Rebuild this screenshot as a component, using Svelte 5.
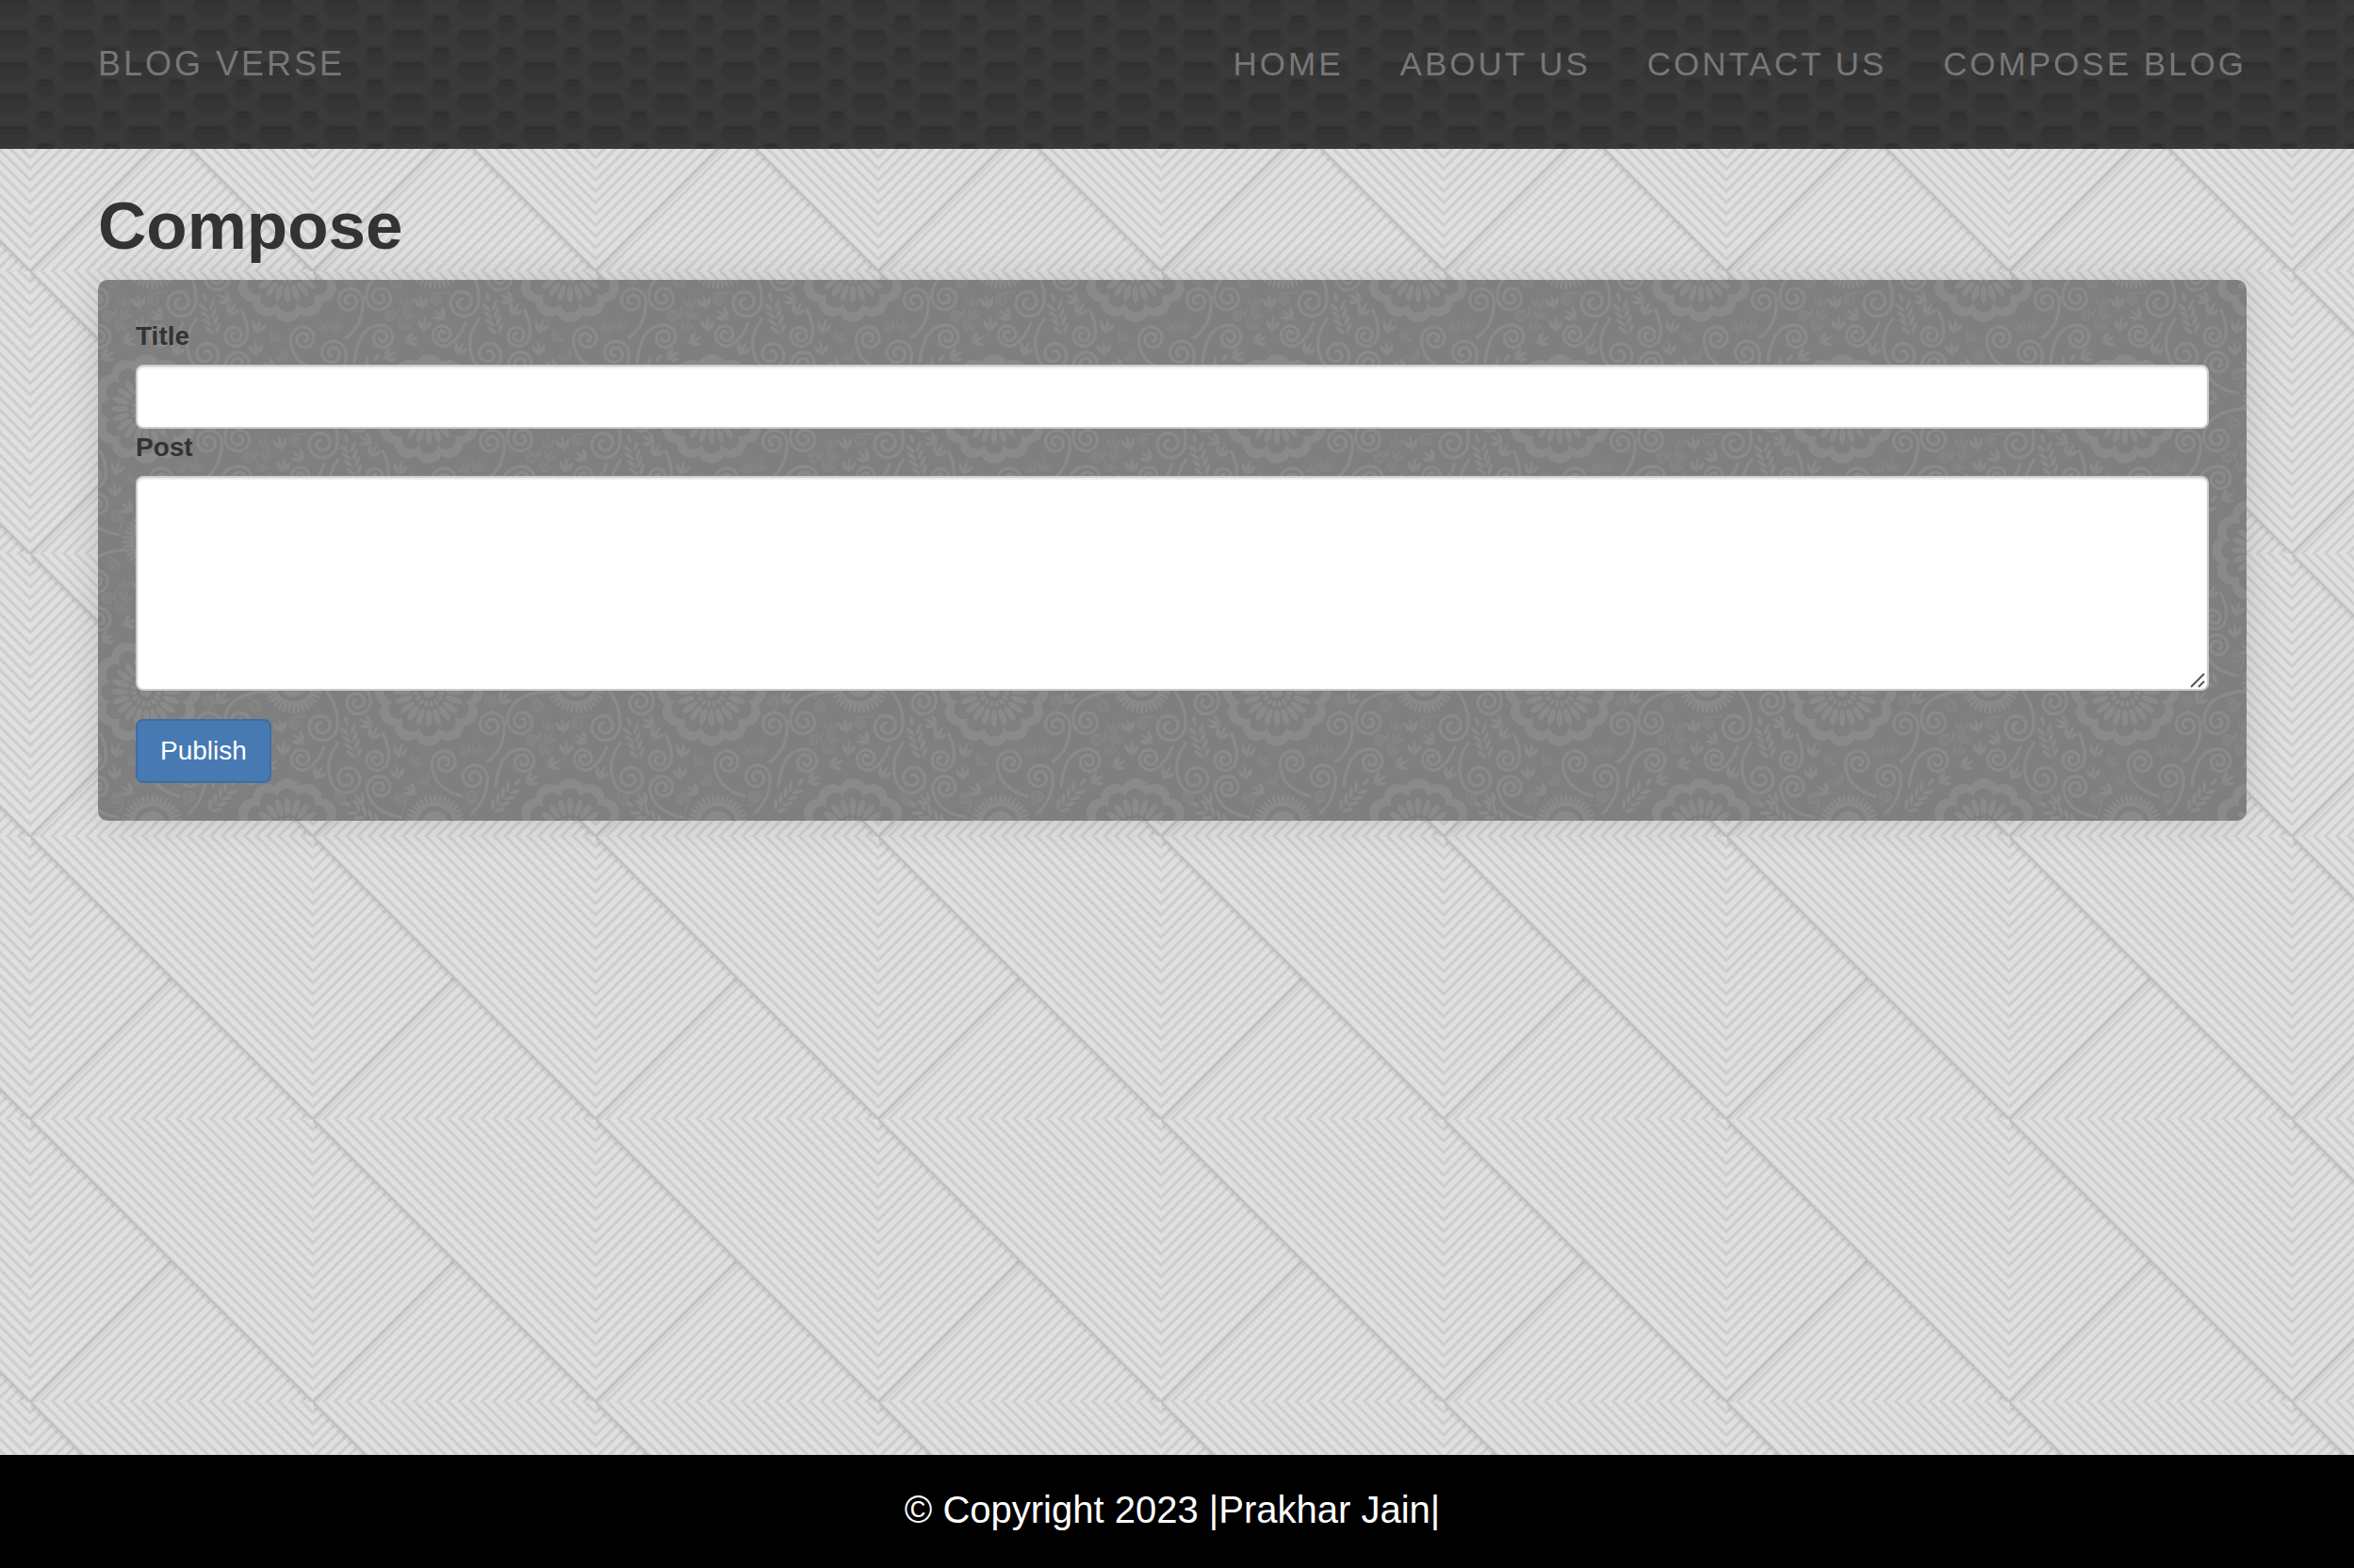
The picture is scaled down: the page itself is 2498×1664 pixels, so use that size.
<script lang="ts">
  type Point = [number, number];

  const links = ['Home', 'About Us', 'Contact Us', 'Compose Blog'];

  let title = $state('');
  let post = $state('');

  const steps = (count: number) => Array.from({ length: count }, (_, i) => i);

  // A scroll: a tail that flows into an inward spiral.
  function scroll(cx: number, cy: number, r: number, start: number, dir: number, reach: number, ex: number, ey: number) {
    const a0 = (start * Math.PI) / 180;
    const at = (a: number, rad: number): Point => [cx + rad * Math.cos(a), cy + rad * Math.sin(a)];
    const [px, py] = at(a0, r);
    const qx = px + dir * Math.sin(a0) * reach;
    const qy = py - dir * Math.cos(a0) * reach;
    let d = `M${ex} ${ey}Q${qx.toFixed(1)} ${qy.toFixed(1)} ${px.toFixed(1)} ${py.toFixed(1)}`;
    const count = 44;
    for (let i = 1; i <= count; i++) {
      const t = i / count;
      const [x, y] = at(a0 + dir * t * Math.PI * 3.4, r * (1 - t * 0.8));
      d += `L${x.toFixed(1)} ${y.toFixed(1)}`;
    }
    return d;
  }

  const scrolls = [
    scroll(183, 152, 50, 10, 1, 60, 200, 40),
    scroll(297, 75, 44, -20, 1, 30, 310, 10),
    scroll(120, 255, 38, 60, 1, 40, 192, 218),
    scroll(265, 318, 50, 150, -1, 75, 235, 205),
    scroll(357, 258, 38, 20, 1, 40, 380, 178),
    scroll(370, 348, 42, 170, 1, 70, 435, 442),
    scroll(577, 268, 42, 180, 1, 80, 630, 375),
    scroll(668, 315, 44, 0, -1, 70, 662, 430),
    scroll(722, 148, 44, 0, -1, 80, 712, 265),
    scroll(820, 137, 44, 180, -1, 85, 905, 40),
    scroll(825, 265, 40, -90, 1, 75, 738, 342),
  ];

  const curls = [
    scroll(100, 143, 20, -90, -1, 14, 140, 120),
    scroll(240, 378, 20, 90, -1, 12, 275, 408),
    scroll(432, 385, 20, 0, -1, 14, 440, 430),
    scroll(660, 378, 20, 0, -1, 12, 640, 405),
    scroll(722, 75, 20, 0, -1, 12, 715, 110),
    scroll(870, 88, 20, 0, 1, 12, 850, 60),
    scroll(852, 197, 20, 0, -1, 12, 880, 170),
  ];

  const sprigs = [
    [52, 150, -10], [110, 192, -50], [62, 222, 5], [22, 272, 65], [175, 300, 30],
    [325, 140, -60], [350, 175, 30], [433, 230, 15], [425, 300, -5], [465, 355, -55],
    [303, 385, -40], [765, 62, 40], [852, 322, 60],
  ];
  const paleSprigs = [[640, 230, -30], [683, 225, 10], [485, 262, 40], [512, 322, -40], [905, 150, 0], [895, 225, 30], [10, 190, 20]];
  const ferns = [[280, 200, -15], [765, 380, 40], [320, 438, -55]];

  // Copies that fill a 900-unit tile with a half-drop repeat.
  const copies: Point[] = [
    [0, 0], [900, 0], [-900, 0], [0, 900], [900, 900], [-900, 900],
    [450, 450], [-450, 450], [450, -450], [-450, -450],
  ];
</script>

{#snippet sprig(x: number, y: number, turn: number)}
  <g transform="translate({x} {y}) rotate({turn})">
    <path d="M0 28Q-11 4 0-27Q11 4 0 28M-3 18Q-24 13-22-13Q-4-5-3 18M3 18Q24 13 22-13Q4-5 3 18" />
  </g>
{/snippet}

<div class="page">
  <svg class="texture" aria-hidden="true">
    <defs>
      <pattern id="weave" x="32" y="288" width="300" height="300" patternUnits="userSpaceOnUse">
        <rect class="weave-base" width="300" height="300" />
        <clipPath id="upper"><path d="M0 0H300V300Z" /></clipPath>
        <clipPath id="lower"><path d="M0 0V300H300Z" /></clipPath>
        <g clip-path="url(#upper)">
          {#each steps(25) as k}
            <path class="halo" d="M{k * 12} -1L{k * 12 + 302} 301" />
            <path class="thread" d="M{k * 12} -1L{k * 12 + 302} 301" />
          {/each}
        </g>
        <g clip-path="url(#lower)">
          {#each steps(51) as k}
            <path class="halo" d="M-1 {k * 12}L{k * 12} -1" />
            <path class="thread" d="M-1 {k * 12}L{k * 12} -1" />
          {/each}
          <path class="seam-shade" d="M0 303L151 152" />
          <path class="seam" d="M0 300L150 150" />
          <path class="seam-shade" d="M-1 1L299 301" />
        </g>
        <path class="seam" d="M-2 -2L302 302" />
      </pattern>
    </defs>
    <rect width="100%" height="100%" fill="url(#weave)" />
  </svg>

  <header>
    <svg class="texture" aria-hidden="true">
      <defs>
        <linearGradient id="hollow" x1="0" y1="0" x2="0" y2="1">
          <stop offset="0" stop-color="#2d2d2d" />
          <stop offset="0.35" stop-color="#343434" />
          <stop offset="1" stop-color="#383838" />
        </linearGradient>
        <filter id="soften" x="-10%" y="-10%" width="120%" height="120%"><feGaussianBlur stdDeviation="0.9" /></filter>
        <pattern id="comb" x="13" y="14" width="70" height="34" patternUnits="userSpaceOnUse">
          <rect class="comb-base" width="70" height="34" />
          <g filter="url(#soften)">
            <path fill="url(#hollow)" d="M29 2H41L47 13L41 25H29L23 13Z" />
            {#each [[0, 18], [70, 18], [0, -16], [70, -16]] as [x, y]}
              <path fill="url(#hollow)" d="M{x - 14} {y}H{x + 14}L{x + 20} {y + 11}L{x + 14} {y + 23}H{x - 14}L{x - 20} {y + 11}Z" />
            {/each}
          </g>
          <path class="comb-seam" d="M0 20V32M70 20V32" />
        </pattern>
      </defs>
      <rect width="100%" height="100%" fill="url(#comb)" />
    </svg>
    <div class="container bar">
      <a class="brand" href="#home">Blog Verse</a>
      <nav>
        {#each links as link}
          <a href="#{link.toLowerCase().replace(' ', '-')}">{link}</a>
        {/each}
      </nav>
    </div>
  </header>

  <main class="container">
    <h1>Compose</h1>
    <form class="panel" onsubmit={(e) => e.preventDefault()}>
      <svg class="texture" aria-hidden="true">
        <defs>
          <g id="motif">
            <g class="scrolls">
              {#each scrolls as d}<path {d} />{/each}
            </g>
            <g class="curls">
              {#each curls as d}<path {d} />{/each}
            </g>
            <g class="leaf">
              {#each sprigs as [x, y, turn]}{@render sprig(x, y, turn)}{/each}
              {#each ferns as [x, y, turn]}
                <g transform="translate({x} {y}) rotate({turn})">
                  {#each steps(4) as k}
                    <ellipse cx="-14" cy={k * 25 - 36} rx="6" ry="18" transform="rotate(-35 -14 {k * 25 - 36})" />
                    <ellipse cx="14" cy={k * 25 - 36} rx="6" ry="18" transform="rotate(35 14 {k * 25 - 36})" />
                  {/each}
                  <ellipse cy="-66" rx="6" ry="14" />
                </g>
              {/each}
            </g>
            <g class="leaf pale">
              {#each paleSprigs as [x, y, turn]}{@render sprig(x, y, turn)}{/each}
            </g>
            <g transform="translate(95 15)">
              {#each steps(36) as k}
                <ellipse class="leaf" cy="-80" rx="5" ry="16" transform="rotate({k * 10})" />
              {/each}
              <circle class="ring" r="65" />
              <circle class="leaf" r="43" />
              <circle class="ground" r="12" />
            </g>
            <g transform="translate(525 42)">
              <circle class="leaf" r="150" />
              {#each steps(12) as k}
                <circle class="leaf" cy="-127" r="46" transform="rotate({k * 30})" />
              {/each}
              <circle class="ground" r="112" />
              {#each steps(12) as k}
                <circle class="ground" cy="-112" r="31" transform="rotate({k * 30})" />
              {/each}
              {#each steps(20) as k}
                <ellipse class="leaf" cy="-84" rx="10" ry="28" transform="rotate({k * 18})" />
              {/each}
              {#each steps(15) as k}
                <ellipse class="leaf" cy="-40" rx="6" ry="10" transform="rotate({k * 24})" />
              {/each}
              <circle class="leaf" r="18" />
            </g>
          </g>
          <pattern id="paisley" width="900" height="900" patternUnits="userSpaceOnUse" patternTransform="translate(476 423) scale(0.33333)">
            <rect class="ground" width="900" height="900" />
            {#each copies as [x, y]}<use href="#motif" {x} {y} />{/each}
          </pattern>
        </defs>
        <rect class="fabric" width="100%" height="100%" fill="url(#paisley)" />
      </svg>

      <label for="title">Title</label>
      <input id="title" type="text" bind:value={title} />
      <label for="post">Post</label>
      <div class="area">
        <textarea id="post" bind:value={post}></textarea>
        <svg class="grip" viewBox="0 0 16 16" aria-hidden="true"><path d="M1 15L15 1M9 15L15 9" /></svg>
      </div>
      <button type="submit">Publish</button>
    </form>
  </main>

  <footer>© Copyright 2023 |Prakhar Jain|</footer>
</div>

<style>
  :global(body) {
    margin: 0;
  }
  .page {
    position: relative;
    isolation: isolate;
    display: flex;
    flex-direction: column;
    min-height: 100vh;
    font-family: 'Liberation Sans', Arial, sans-serif;
    font-size: 28px;
    line-height: 40px;
    color: #333;
  }
  .texture {
    position: absolute;
    inset: 0;
    z-index: -1;
    width: 100%;
    height: 100%;
  }
  .weave-base { fill: #e0e0e0; }
  .halo { stroke: #d7d7d7; stroke-width: 4; }
  .thread { stroke: #cccccc; stroke-width: 2; }
  .seam { stroke: #bfbfbf; stroke-width: 2; }
  .seam-shade { stroke: #000; stroke-opacity: 0.05; stroke-width: 5; }
  .comb-base { fill: #3a3a3a; }
  .comb-seam { stroke: #323232; stroke-width: 1; }

  .container {
    box-sizing: border-box;
    width: 100%;
    padding-left: 104px;
    padding-right: 114px;
  }
  header {
    position: relative;
    isolation: isolate;
    padding: 48px 0 70px;
  }
  .bar {
    display: flex;
    justify-content: space-between;
  }
  nav {
    display: flex;
    gap: 60px;
  }
  header a {
    color: #777;
    font-size: 35px;
    letter-spacing: 3px;
    text-transform: uppercase;
    text-decoration: none;
    white-space: nowrap;
  }
  header .brand {
    font-size: 36px;
  }

  main {
    flex: 1;
  }
  h1 {
    margin: 42px 0 18px;
    font-size: 71px;
    line-height: 79px;
    font-weight: 700;
  }
  .panel {
    position: relative;
    isolation: isolate;
    padding: 40px;
    border-radius: 10px;
    box-shadow: 0 0 40px rgba(0, 0, 0, 0.12);
  }
  .panel > .texture {
    border-radius: 10px;
  }
  .scrolls, .curls, .ring { fill: none; stroke: #8a8a8a; }
  .scrolls { stroke-width: 10; stroke-linecap: round; }
  .curls { stroke: #868686; stroke-width: 6; }
  .ring { stroke-width: 14; }
  .leaf { fill: #8a8a8a; }
  .pale { fill: #848484; }
  .ground { fill: #7f7f7f; }

  label {
    display: block;
    margin-bottom: 10px;
    font-weight: 700;
  }
  input,
  textarea {
    display: block;
    box-sizing: border-box;
    width: 100%;
    padding: 12px 24px;
    border: 2px solid #ccc;
    border-radius: 8px;
    background: #fff;
    box-shadow: inset 0 2px 2px rgba(0, 0, 0, 0.075);
    color: #555;
    font: inherit;
  }
  input {
    height: 68px;
  }
  .area {
    position: relative;
    margin-bottom: 30px;
  }
  textarea {
    height: 228px;
    resize: none;
  }
  .grip {
    position: absolute;
    right: 4px;
    bottom: 3px;
    width: 16px;
    height: 16px;
    fill: none;
    stroke: #555;
    stroke-width: 2;
    pointer-events: none;
  }
  button {
    display: block;
    padding: 12px 24px;
    border: 2px solid #3f6ca5;
    border-radius: 8px;
    background: #4779b2;
    color: #fff;
    font: inherit;
    cursor: pointer;
  }
  footer {
    padding: 38px 10px 42px 0;
    background: #000;
    color: #fff;
    font-size: 40px;
    text-align: center;
  }
</style>
